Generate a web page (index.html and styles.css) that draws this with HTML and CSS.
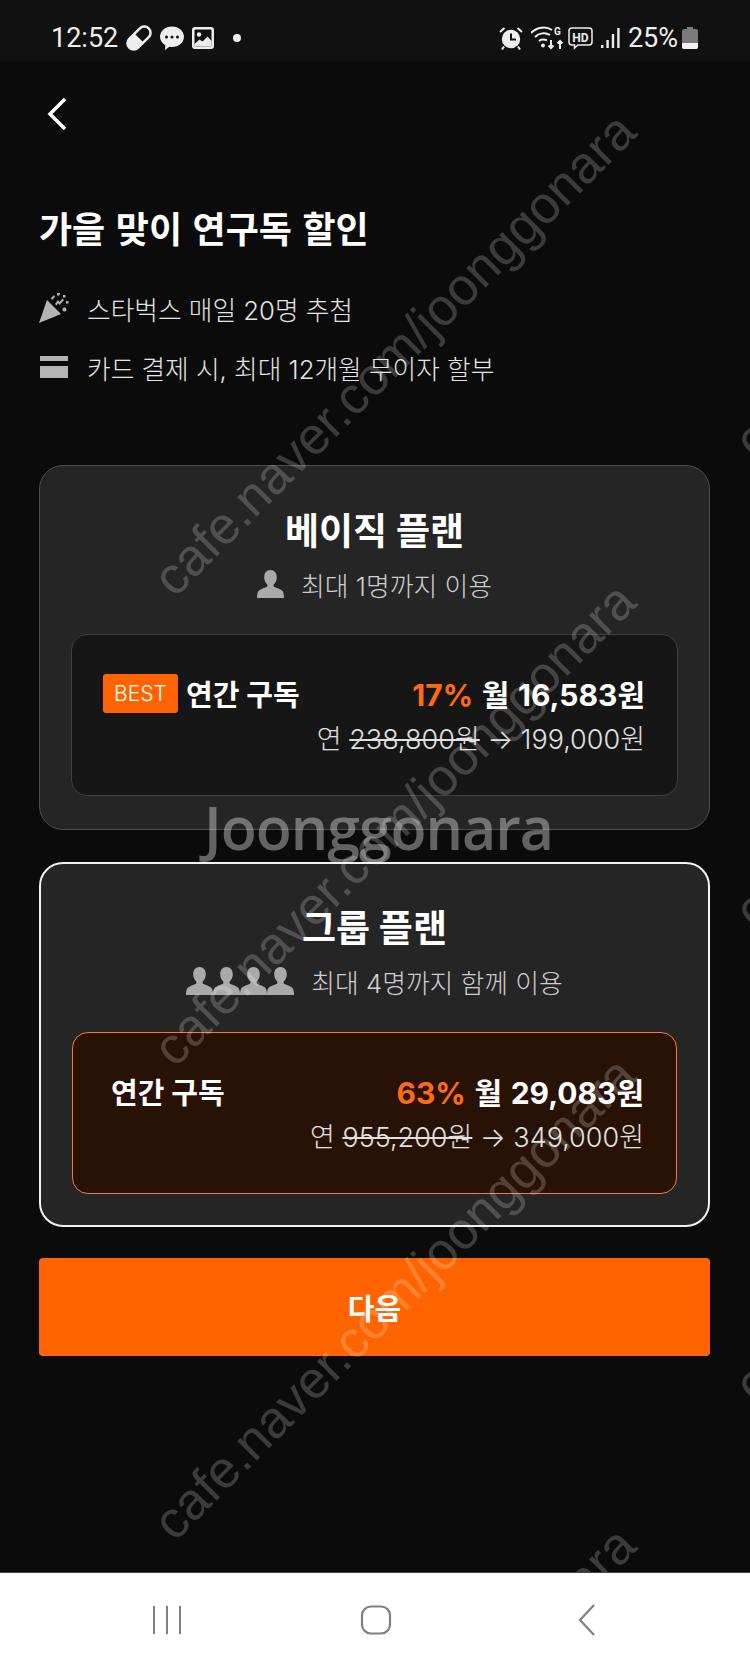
FILE: index.html
```html
<!DOCTYPE html>
<html lang="ko">
<head>
  <meta charset="utf-8">
  <title>연구독 할인</title>
  <link rel="stylesheet" href="styles.css">
</head>
<body>
  <svg class="defs" width="0" height="0">
    <symbol id="person" viewBox="0 0 27 28">
      <path d="M13.500 0c3.800 0 6.300 3 6.300 7.300 0 3-1.100 5.300-2.800 6.900-.8.800-.6 2.200.4 2.700 2.500 1.200 5.600 1.900 7.600 3.600 1.600 1.400 2 4.500 2 7.500H0c0-3 .4-6.100 2-7.500 2-1.700 5.100-2.400 7.600-3.600 1-.5 1.200-1.900.4-2.700C8.300 12.600 7.200 10.300 7.200 7.300 7.200 3 9.700 0 13.500 0z"/>
    </symbol>
  </svg>

  <div class="screen">
    <header class="status">
      <div class="status-left">
        <span class="clock">12:52</span>
        <svg class="ic-pill" width="26" height="26" viewBox="0 0 26 26"><g transform="rotate(-45 13 13)"><rect x="-2" y="5.500" width="30" height="15" rx="7.500" fill="#eee"/><path d="M13 8h7.500a5 5 0 0 1 0 10H13z" fill="#111"/></g></svg>
        <svg class="ic-chat" width="26" height="26" viewBox="0 0 26 26"><path d="M13 1.500c6.800 0 12 4.500 12 10.300s-5.200 10.200-12 10.200c-.9 0-1.800-.1-2.600-.2L6 25l.3-4.800C3 18.400 1 15.300 1 11.800 1 6 6.200 1.500 13 1.500z" fill="#eee"/><circle cx="7.500" cy="12" r="1.500" fill="#111"/><circle cx="13" cy="12" r="1.500" fill="#111"/><circle cx="18.500" cy="12" r="1.500" fill="#111"/></svg>
        <svg class="ic-image" width="22" height="22" viewBox="0 0 22 22"><rect width="22" height="22" rx="3" fill="#eee"/><rect x="2.500" y="2.500" width="17" height="17" rx="1" fill="#111"/><circle cx="7" cy="7.500" r="2.200" fill="#eee"/><path d="M2.500 17l5-4.500 3 2 5-5 4 4.500v5.500h-17z" fill="#eee"/></svg>
        <span class="status-dot"></span>
      </div>
      <div class="status-right">
        <svg class="ic-alarm" width="24" height="24" viewBox="0 0 24 24"><circle cx="12" cy="13" r="9.200" fill="#eee"/><path d="M12 7.500V13.500H17" fill="none" stroke="#111" stroke-width="2"/><path d="M1 6l4.500-4M23 6l-4.500-4M5 20.500l-2 3M19 20.500l2 3" stroke="#eee" stroke-width="2" fill="none"/></svg>
        <svg class="ic-wifi" width="33" height="24" viewBox="0 0 33 24"><g fill="none" stroke="#eee" stroke-width="2"><path d="M0 7c6-6 15-7 21-3"/><path d="M4 11c4-4 10-5 15-2"/><path d="M8 15c2-2 6-2 8-.5"/><path d="M20 14v8M17.500 19.500l2.500 2.500 2.500-2.500M29 23v-8M26.500 17.500l2.500-2.500 2.500 2.500"/></g><circle cx="12" cy="19.500" r="1.900" fill="#eee"/><text x="23" y="9" class="ic-g">G</text></svg>
        <svg class="ic-hd" width="25" height="24" viewBox="0 0 25 24"><path d="M4 2h17a3 3 0 0 1 3 3v11a3 3 0 0 1-3 3H10l-3.500 3v-3H4a3 3 0 0 1-3-3V5a3 3 0 0 1 3-3z" fill="none" stroke="#eee" stroke-width="1.500"/><text x="12.500" y="15.500" class="ic-hd-text">HD</text></svg>
        <svg class="ic-signal" width="20" height="22" viewBox="0 0 20 22"><path d="M1 18h2.400v3H1zM6.400 13h2.400v8H6.400zM11.800 7h2.400v14h-2.400zM17.200 1h2.400v20h-2.400z" fill="#eee"/></svg>
        <span class="battery-pct">25%</span>
        <svg class="ic-battery" width="16" height="22" viewBox="0 0 16 22"><path d="M5 0h6v2h3a2 2 0 0 1 2 2v16a2 2 0 0 1-2 2H2a2 2 0 0 1-2-2V4a2 2 0 0 1 2-2h3z" fill="#7a7a7a"/><path d="M0 16h16v4a2 2 0 0 1-2 2H2a2 2 0 0 1-2-2z" fill="#f2f2f2"/></svg>
      </div>
    </header>

    <main class="content">
      <svg class="back" width="24" height="36" viewBox="0 0 24 36"><path d="M20 3L5 18l15 15" fill="none" stroke="#fff" stroke-width="3.500"/></svg>

      <h1 class="title">가을 맞이 연구독 할인</h1>

      <ul class="perks">
        <li class="perk">
          <svg class="perk-icon" width="30" height="30" viewBox="0 0 30 30"><path d="M8 7l14 14L0 30z" fill="#b4b4b4"/><path d="M12 5l3-3 1 2-3 3zM18 0h3l-.5 2.500h-2.500zM16 11l3-4 1.500 2 3-3.500 1.500 1.500-4.500 5-1.500-2-1.500 2.500zM24 2h2.500v2.500H24zM27 8h2.500v2.500H27zM25 14.500a2 2 0 1 1 0 3.900 2 2 0 0 1 0-3.900z" fill="#b4b4b4"/></svg>
          <span>스타벅스 매일 20명 추첨</span>
        </li>
        <li class="perk">
          <svg class="perk-icon" width="30" height="24" viewBox="0 0 30 24"><path d="M1 1h28v5H1zM1 11h28v12H1z" fill="#b4b4b4"/></svg>
          <span>카드 결제 시, 최대 12개월 무이자 할부</span>
        </li>
      </ul>

      <section class="plan">
        <h2 class="plan-name">베이직 플랜</h2>
        <p class="plan-limit">
          <svg class="person"><use href="#person"/></svg>
          <span class="limit-text">최대 1명까지 이용</span>
        </p>
        <div class="price-box">
          <div class="price-top">
            <div class="price-label">
              <span class="best">BEST</span>
              <span>연간 구독</span>
            </div>
            <div class="price-month"><em class="rate">17%</em> 월 16,583원</div>
          </div>
          <div class="price-year">연 <s>238,800원</s> → 199,000원</div>
        </div>
      </section>

      <section class="plan plan-selected">
        <h2 class="plan-name">그룹 플랜</h2>
        <p class="plan-limit">
          <svg class="person"><use href="#person"/></svg>
          <svg class="person"><use href="#person"/></svg>
          <svg class="person"><use href="#person"/></svg>
          <svg class="person"><use href="#person"/></svg>
          <span class="limit-text">최대 4명까지 함께 이용</span>
        </p>
        <div class="price-box">
          <div class="price-top">
            <div class="price-label price-label-plain">
              <span>연간 구독</span>
            </div>
            <div class="price-month"><em class="rate">63%</em> 월 29,083원</div>
          </div>
          <div class="price-year">연 <s>955,200원</s> → 349,000원</div>
        </div>
      </section>

      <button class="next" type="button">다음</button>
    </main>

    <nav class="softkeys">
      <svg width="30" height="30" viewBox="0 0 30 30"><path d="M2 1v28M15 1v28M28 1v28" stroke="#808080" stroke-width="2" fill="none"/></svg>
      <svg class="key-home" width="32" height="30" viewBox="0 0 32 30"><rect x="2" y="1.500" width="28" height="27" rx="9" fill="none" stroke="#808080" stroke-width="2.200"/></svg>
      <svg width="20" height="32" viewBox="0 0 20 32"><path d="M17 1L3 16l14 15" stroke="#808080" stroke-width="2.200" fill="none"/></svg>
    </nav>

    <div class="marks">
      <span class="mark mark-1">cafe.naver.com/joonggonara</span>
      <span class="mark mark-2">cafe.naver.com/joonggonara</span>
      <span class="mark mark-3">cafe.naver.com/joonggonara</span>
      <span class="mark mark-4">cafe.naver.com/joonggonara</span>
      <span class="mark mark-5">cafe.naver.com/joonggonara</span>
      <span class="mark mark-6">cafe.naver.com/joonggonara</span>
      <span class="mark mark-7">cafe.naver.com/joonggonara</span>
      <span class="logo-mark">Joonggonara</span>
    </div>
  </div>
</body>
</html>
```

FILE: styles.css
```css
* {
  box-sizing: border-box;
}

html, body {
  margin: 0;
  padding: 0;
  background-color: #0b0b0b;
}

body {
  font-family: Inter, 'Noto Sans CJK KR', sans-serif;
  color: #fff;
}

.defs {
  position: absolute;
}

.screen {
  position: relative;
  display: flex;
  flex-direction: column;
  width: 750px;
  height: 1667px;
  overflow: hidden;
}

/* status bar */
.status {
  display: flex;
  justify-content: space-between;
  align-items: center;
  height: 62px;
  padding: 14px 52px 0 51px;
  background-color: #111;
  color: #eee;
  font-family: Roboto, sans-serif;
}

.status-left,
.status-right {
  display: flex;
  align-items: center;
}

.clock {
  font-size: 27px;
  margin-right: 8px;
}

.ic-chat {
  margin-left: 7px;
}

.ic-image {
  margin-left: 7px;
}

.status-dot {
  width: 8px;
  height: 8px;
  margin-left: 19px;
  border-radius: 50%;
  background-color: #eee;
}

.ic-wifi {
  margin-left: 8px;
}

.ic-hd {
  margin-left: 4px;
}

.ic-signal {
  margin-left: 7px;
}

.ic-g {
  font-family: Roboto, sans-serif;
  font-size: 10px;
  font-weight: 700;
  fill: #eee;
}

.ic-hd-text {
  font-family: Roboto, sans-serif;
  font-size: 12px;
  font-weight: 700;
  fill: #eee;
  text-anchor: middle;
}

.battery-pct {
  font-size: 27px;
  margin-left: 8px;
}

.ic-battery {
  margin-left: 4px;
}

/* page */
.content {
  flex: 1;
  padding: 34px 40px 0 39px;
}

.back {
  display: block;
  margin-left: 6px;
}

.title {
  margin: 73px 0 0;
  font-size: 36px;
  line-height: 50px;
  font-weight: 700;
  word-spacing: 2px;
}

.perks {
  list-style: none;
  margin: 33px 0 0;
  padding: 0;
}

.perk {
  display: flex;
  align-items: center;
  height: 40px;
  margin-bottom: 19px;
  font-size: 25.700px;
  font-weight: 300;
  color: #e4e4e4;
}

.perk-icon {
  flex: none;
  margin-right: 18px;
}

/* plan cards */
.plan {
  height: 365px;
  margin-top: 32px;
  padding: 41px 31px 0;
  background-color: #252525;
  border: 1px solid #4d4d4d;
  border-radius: 24px;
}

.perks + .plan {
  margin-top: 78px;
}

.plan-selected {
  padding-top: 40px;
  border: 2px solid #f2f2f2;
}

.plan-name {
  margin: 0;
  text-align: center;
  font-size: 37px;
  line-height: 50px;
  font-weight: 700;
}

.plan-limit {
  display: flex;
  justify-content: center;
  align-items: center;
  height: 36px;
  margin: 9px 0 0;
  color: #cfcfcf;
  font-size: 25.800px;
  font-weight: 300;
}

.person {
  width: 27px;
  height: 28px;
  fill: #aaa;
}

.limit-text {
  margin-left: 17px;
}

.price-box {
  height: 162px;
  margin-top: 32px;
  padding: 35px 32px 0 31px;
  background-color: #161616;
  border: 1px solid #3f3f3f;
  border-radius: 16px;
}

.plan-selected .price-box {
  margin-top: 33px;
  background-color: #281206;
  border-color: #f47a3a;
}

.price-top {
  display: flex;
  justify-content: space-between;
  align-items: center;
  height: 46px;
}

.price-label {
  display: flex;
  align-items: center;
  font-size: 29px;
  font-weight: 700;
}

.price-label-plain {
  padding-left: 7px;
}

.best {
  width: 75px;
  height: 39px;
  margin-right: 8px;
  background-color: #ff6400;
  border-radius: 3px;
  font-size: 21px;
  font-weight: 300;
  line-height: 39px;
  text-align: center;
}

.price-month {
  font-size: 30px;
  font-weight: 700;
  word-spacing: 1.500px;
}

.rate {
  color: #ff6a13;
  font-style: normal;
}

.price-year {
  margin-top: 5px;
  text-align: right;
  font-size: 27px;
  line-height: 38px;
  font-weight: 300;
  color: #e0e0e0;
}

/* button */
.next {
  display: block;
  width: 100%;
  height: 98px;
  margin-top: 31px;
  border: 0;
  border-radius: 4px;
  background-color: #ff6400;
  color: #fff;
  font-family: inherit;
  font-size: 29px;
  font-weight: 700;
}

/* android keys */
.softkeys {
  position: relative;
  z-index: 2;
  display: flex;
  justify-content: space-between;
  align-items: center;
  height: 95px;
  padding: 0 153px 0 152px;
  background-color: #fff;
  border-top: 1px solid #444;
}

.key-home {
  margin-right: 8px;
}

/* watermark */
.marks {
  position: absolute;
  inset: 0;
  z-index: 1;
  pointer-events: none;
}

.mark {
  position: absolute;
  transform: rotate(-45deg);
  transform-origin: left bottom;
  font-family: 'Liberation Sans', sans-serif;
  font-size: 52px;
  line-height: 53px;
  white-space: nowrap;
  color: rgba(255, 255, 255, 0.2);
}

.mark-1 { left: 181px; top: 552px; }
.mark-2 { left: 181px; top: 1022px; }
.mark-3 { left: 181px; top: 1496px; }
.mark-4 { left: 762px; top: 414px; }
.mark-5 { left: 762px; top: 884px; }
.mark-6 { left: 762px; top: 1358px; }
.mark-7 { left: 181px; top: 1966px; }

.logo-mark {
  position: absolute;
  left: 204px;
  top: 782px;
  font-family: 'Open Sans', sans-serif;
  font-size: 59px;
  font-weight: 600;
  line-height: 90px;
  letter-spacing: -1px;
  color: rgba(255, 255, 255, 0.36);
}
```
